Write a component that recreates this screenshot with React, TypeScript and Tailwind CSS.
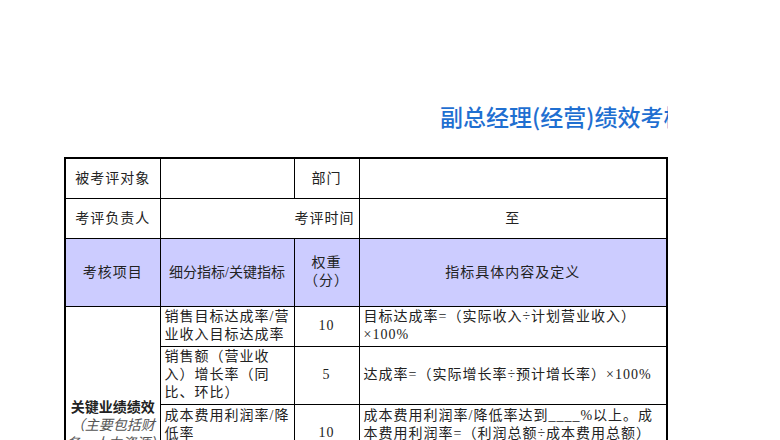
export default function App() {
  const f = { fontFamily: '"Liberation Serif", "Noto Sans CJK SC", serif' };
  const td = "border border-black text-[14px] tracking-[1px] text-[#222] px-1";
  return (
    <div className="w-[780px] h-[440px] overflow-hidden bg-white" style={f}>
      <div className="ml-[64px] w-[604px] pt-[100px] h-[157px] overflow-hidden whitespace-nowrap">
        <div
          className="pl-[376px] text-[23px] leading-[32px] font-medium text-[#1f6fd1]"
          style={{ fontFamily: '"Noto Sans CJK SC", sans-serif' }}
        >
          副总经理(经营)绩效考核表
        </div>
      </div>
      <table className="ml-[64px] w-[604px] border-collapse border-2 border-black table-fixed">
        <colgroup>
          <col className="w-[95px]" />
          <col className="w-[134px]" />
          <col className="w-[65px]" />
          <col />
        </colgroup>
        <tbody>
          <tr className="h-[40px]">
            <td className={`${td} text-center`}>被考评对象</td>
            <td className={td}></td>
            <td className={`${td} text-center`}>部门</td>
            <td className={td}></td>
          </tr>
          <tr className="h-[40px]">
            <td className={`${td} text-center`}>考评负责人</td>
            <td className={`${td} text-right`} colSpan={2}>考评时间</td>
            <td className={`${td} text-center`}>至</td>
          </tr>
          <tr className="h-[68px] bg-[#ccccff]">
            <td className={`${td} text-center`}>考核项目</td>
            <td className={`${td} text-center whitespace-nowrap !tracking-normal`}>细分指标/关键指标</td>
            <td className={`${td} text-center leading-[18px]`}>权重<br />（分）</td>
            <td className={`${td} text-center`}>指标具体内容及定义</td>
          </tr>
          <tr className="h-[40px] leading-[18px]">
            <td className={`${td} align-top text-center pt-[92px] !px-0 !tracking-normal`} rowSpan={4}>
              <div className="font-bold">关键业绩绩效</div>
              <div className="italic text-[#555]">（主要包括财务、人力资源）</div>
            </td>
            <td className={td}>销售目标达成率/营业收入目标达成率</td>
            <td className={`${td} text-center`}>10</td>
            <td className={td}>目标达成率=（实际收入÷计划营业收入）×100%</td>
          </tr>
          <tr className="h-[58px] leading-[18px]">
            <td className={td}>销售额（营业收入）增长率（同比、环比）</td>
            <td className={`${td} text-center`}>5</td>
            <td className={td}>达成率=（实际增长率÷预计增长率）×100%</td>
          </tr>
          <tr className="h-[50px] leading-[18px]">
            <td className={`${td} align-top pt-[2px]`}>成本费用利润率/降低率</td>
            <td className={`${td} text-center`}>10</td>
            <td className={`${td} align-top pt-[2px]`}>
              成本费用利润率/降低率达到____%以上。成本费用利润率=（利润总额÷成本费用总额）×100%
            </td>
          </tr>
          <tr className="h-[40px]">
            <td className={td}></td>
            <td className={td}></td>
            <td className={td}></td>
          </tr>
        </tbody>
      </table>
    </div>
  );
}
